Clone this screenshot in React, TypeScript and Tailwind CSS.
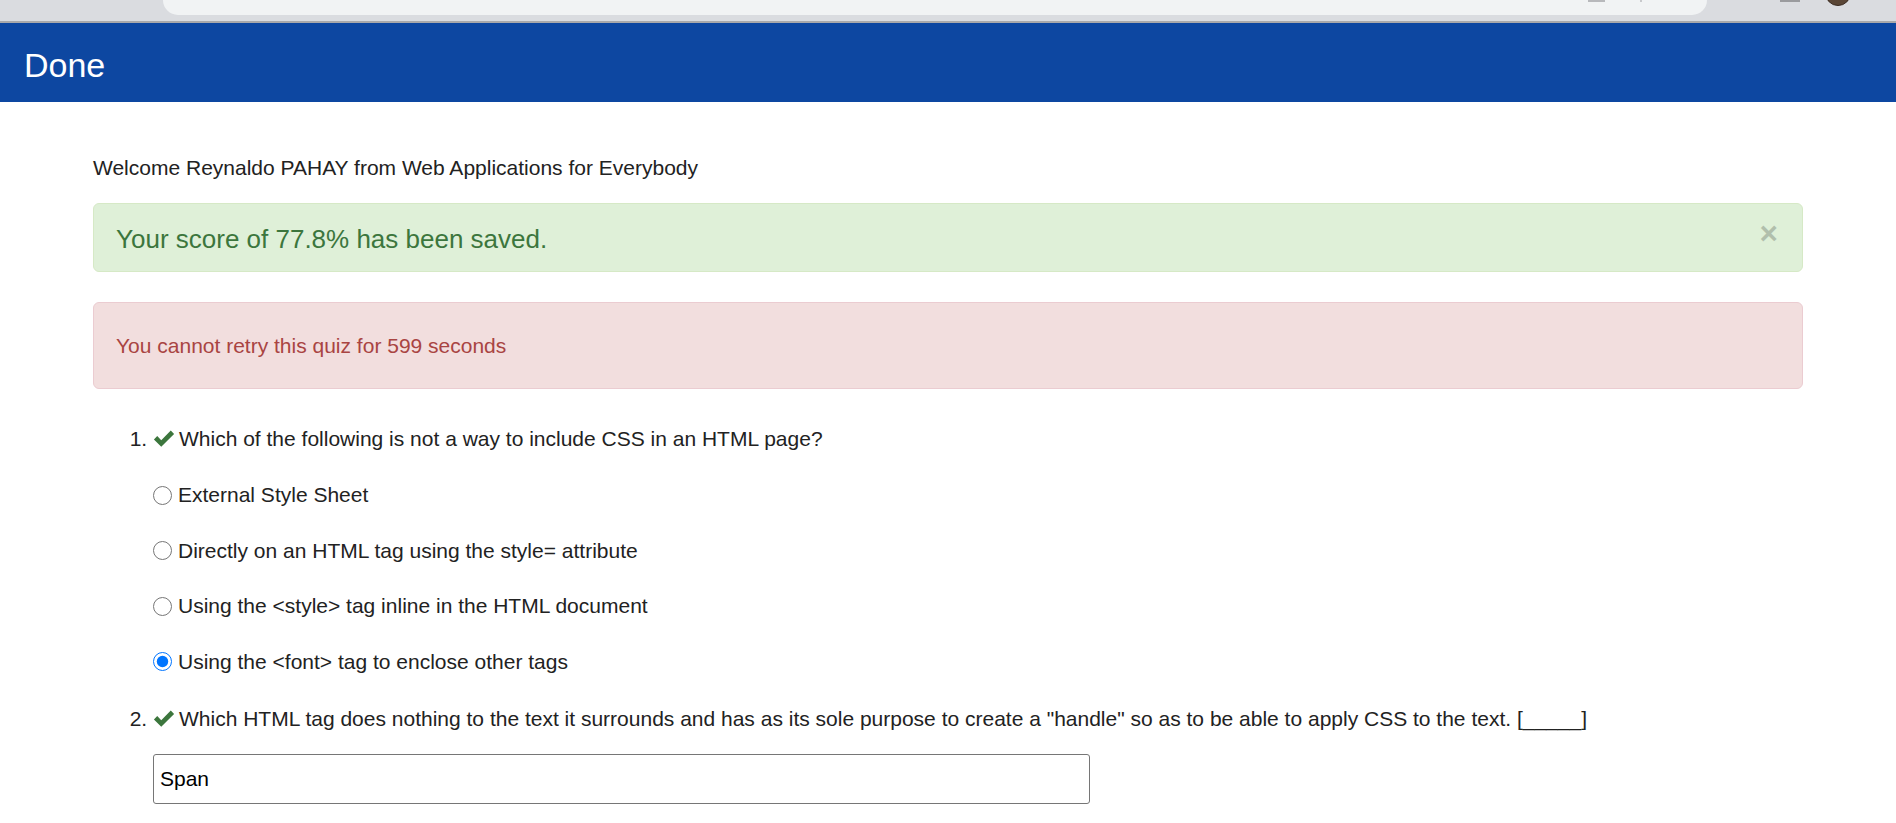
import React from "react";

function Check() {
  return (
    <svg width="22" height="19" viewBox="0 0 24 20" className="inline-block align-[-2px] mr-[4px]">
      <polygon points="1,11 4.6,7.4 9,11.8 19.4,1.4 23,5 9,19" fill="#3c763d" />
    </svg>
  );
}

function Option({ label, checked }: { label: string; checked?: boolean }) {
  return (
    <div className="flex items-center h-[30px]">
      <input
        type="radio"
        readOnly
        checked={!!checked}
        className="w-[19px] h-[19px] m-0 mr-[6px] accent-[#0075ff]"
      />
      <span>{label}</span>
    </div>
  );
}

export default function App() {
  return (
    <div className="w-[1896px] h-[823px] overflow-hidden bg-white font-['Liberation_Sans',Arial,sans-serif] text-[#222]">
      {/* browser chrome remnant */}
      <div className="h-[23px] bg-[#dadce0] border-b-2 border-[#a9a9ab] flex items-start overflow-hidden">
        <div className="ml-[163px] w-[1544px] h-[15px] bg-[#f1f3f4] rounded-b-[18px] flex items-start justify-end pr-[65px] gap-[35px]">
          <div className="w-[17px] h-[2px] bg-[#b8b9bc]" />
          <div className="w-[2px] h-[2px] bg-[#c8c9cc]" />
        </div>
        <div className="ml-[73px] w-[20px] h-[2px] bg-[#9a9b9e]" />
        <div className="ml-[25px] -mt-[20px] w-[26px] h-[26px] rounded-full bg-[#5a4636] border border-[#3a2a20]" />
      </div>

      {/* header */}
      <div className="h-[79px] bg-[#0d47a1] flex items-center pl-[24px] pt-[4px]">
        <span className="text-white text-[34px] leading-none">Done</span>
      </div>

      <div className="w-[1710px] mx-auto">
        <p className="mt-[51px] text-[21px] leading-[30px]">
          Welcome Reynaldo PAHAY from Web Applications for Everybody
        </p>

        <div className="relative mt-[20px] h-[69px] bg-[#dff0d8] border border-[#d6e9c6] rounded-[6px] pl-[22px] pt-[17px] text-[#3c763d] text-[26px] leading-[36px]">
          Your score of 77.8% has been saved.
          <span className="absolute right-[24px] top-[14px] text-[31.5px] font-bold leading-none text-black opacity-20">
            ×
          </span>
        </div>

        <div className="mt-[30px] h-[87px] bg-[#f2dede] border border-[#ebccd1] rounded-[6px] pl-[22px] pt-[28px] text-[#a94442] text-[21px] leading-[30px]">
          You cannot retry this quiz for 599 seconds
        </div>

        <ol className="mt-[35px] list-decimal pl-[60px] text-[21px] leading-[30px]">
          <li>
            <div>
              <Check />
              Which of the following is not a way to include CSS in an HTML page?
            </div>
            <div className="mt-[26px] flex flex-col gap-[25.5px]">
              <Option label="External Style Sheet" />
              <Option label="Directly on an HTML tag using the style= attribute" />
              <Option label="Using the <style> tag inline in the HTML document" />
              <Option label="Using the <font> tag to enclose other tags" checked />
            </div>
          </li>
          <li className="mt-[27px]">
            <div>
              <Check />
              Which HTML tag does nothing to the text it surrounds and has as its sole purpose to create a "handle" so as to be able to apply CSS to the text. [_____]
            </div>
            <input
              type="text"
              readOnly
              defaultValue="Span"
              className="mt-[20px] block w-[937px] h-[50px] border border-[#767676] rounded-[3px] px-[6px] text-[21px] text-black outline-none bg-white"
            />
          </li>
        </ol>
      </div>
    </div>
  );
}
